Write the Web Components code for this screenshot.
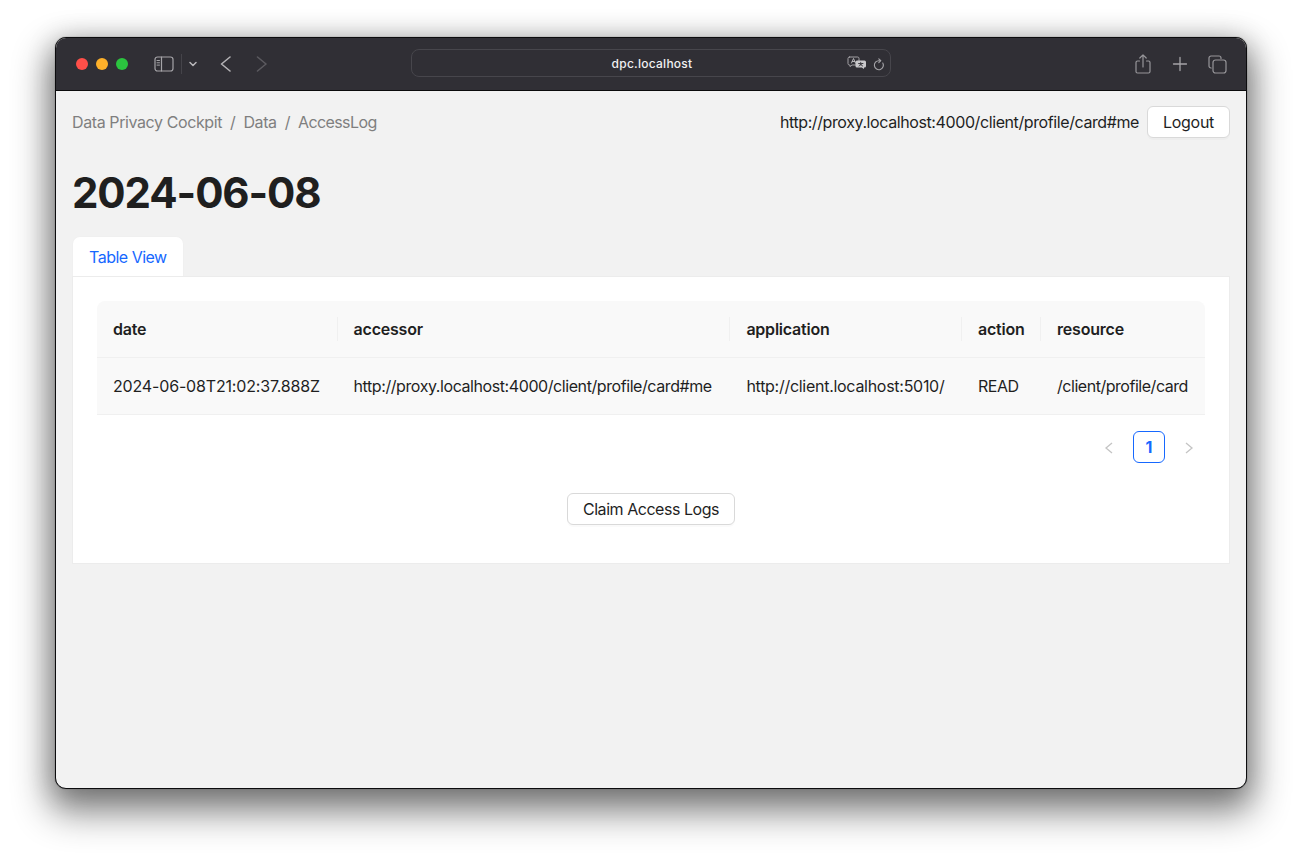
<!DOCTYPE html>
<html>
<head>
<meta charset="utf-8">
<title>dpc.localhost</title>
<style>
    html, body { margin: 0; background: #fff; }
    body { padding: 37px 55px 0; height: 862px; box-sizing: border-box; overflow: hidden; font-family: Inter, "Liberation Sans", sans-serif; }
</style>
</head>
<body>
<browser-window url="dpc.localhost">
    <app-header></app-header>
    <h1 style="margin: 30px 0 0; font: 700 42px/50px Inter, sans-serif; color: #1f1f1f; letter-spacing: -1.1px;">2024-06-08</h1>
    <tab-card label="Table View">
        <log-table></log-table>
        <page-nav></page-nav>
        <div style="display: flex; justify-content: center; margin-top: 30px;">
            <plain-button>Claim Access Logs</plain-button>
        </div>
    </tab-card>
</browser-window>

<script>
class BrowserWindow extends HTMLElement {
    constructor() {
        super();
        const shadow = this.attachShadow({ mode: 'open' });
        shadow.innerHTML = `
        <style>
            :host {
                display: block;
                width: 1192px;
                height: 752px;
                box-sizing: border-box;
                border: 1px solid #0c0c0e;
                border-radius: 11px;
                background: #f2f2f2;
                box-shadow: 0 0 1px #444, 0 18px 36px 6px rgba(0,0,0,.46), 0 4px 28px rgba(0,0,0,.24);
                overflow: hidden;
            }
            .bar {
                height: 53px;
                box-sizing: border-box;
                background: #302f35;
                border-bottom: 1px solid #0b0b0c;
                display: flex;
                align-items: center;
                padding: 0 20px;
                position: relative;
            }
            .dots { display: flex; gap: 8px; }
            .dots i { width: 12px; height: 12px; border-radius: 50%; display: block; }
            svg { display: block; fill: none; stroke-linecap: round; stroke-linejoin: round; }
            .left { display: flex; align-items: center; margin-left: 26px; }
            .sep { width: 1px; height: 20px; background: #45444a; margin: 0 0 0 7px; }
            .url {
                position: absolute;
                left: 355px;
                top: 11px;
                width: 480px;
                height: 28px;
                box-sizing: border-box;
                border: 1px solid #47464c;
                border-radius: 8px;
                display: flex;
                align-items: center;
                justify-content: center;
                padding: 1px 0 0 2px;
                color: #f1f1f2;
                font: 500 12px/1 Inter, sans-serif;
                letter-spacing: .25px;
            }
            .url svg { position: absolute; }
            .right { margin-left: auto; display: flex; align-items: center; gap: 20px; margin-right: -1px; }
            .content { padding: 15px 16px 0; }
        </style>
        <div class="bar">
            <div class="dots">
                <i style="background:#ff4f49"></i><i style="background:#fdb02a"></i><i style="background:#2bc43f"></i>
            </div>
            <div class="left">
                <svg width="20" height="16" viewBox="0 0 20 16" stroke="#a5a4a8" stroke-width="1.2">
                    <rect x="1" y="1" width="18" height="14" rx="2.5"/>
                    <path d="M7.5 1v14"/>
                    <path d="M3 4.5h2.5M3 6.8h2.5M3 9.1h2.5" stroke-width="1"/>
                </svg>
                <div class="sep"></div>
                <svg style="margin-left:7px" width="8" height="6" viewBox="0 0 8 6" stroke="#b8b7ba" stroke-width="1.5"><path d="M1 1.5l3 3 3-3"/></svg>
                <svg style="margin-left:23px" width="11" height="16" viewBox="0 0 11 16" stroke="#b3b2b5" stroke-width="1.6"><path d="M10 1L1.500 8l8.500 7"/></svg>
                <svg style="margin-left:25px" width="11" height="16" viewBox="0 0 11 16" stroke="#5b5a5f" stroke-width="1.6"><path d="M1.500 1L10 8l-8.500 7"/></svg>
            </div>
            <div class="url">
                <span id="url"></span>
                <svg style="left:435px;top:6px" width="20" height="14" viewBox="0 0 20 14">
                    <path d="M2.5 1h8A1.5 1.5 0 0 1 12 2.5v5A1.5 1.5 0 0 1 10.500 9H5l-2 1.600V9h-.5A1.500 1.500 0 0 1 1 7.500v-5A1.500 1.500 0 0 1 2.500 1z" stroke="#a2a1a5" stroke-width="1"/>
                    <path d="M4.500 7l2-4.500 2 4.500M5.300 5.500h2.400" stroke="#c2c1c4" stroke-width=".9"/>
                    <path d="M10 4.500h7.500A1.500 1.500 0 0 1 19 6v4a1.500 1.500 0 0 1-1.500 1.500H17V13l-2.200-1.500H10A1.500 1.500 0 0 1 8.500 10V6A1.500 1.500 0 0 1 10 4.500z" fill="#c9c8cb"/>
                    <path d="M11.500 7.500h4.500M13.700 6.300v1.200M12 10l3.500-2.500M12.700 8l3 2" stroke="#302f35" stroke-width=".8"/>
                </svg>
                <svg style="left:461px;top:8px" width="12" height="13" viewBox="0 0 12 13" stroke="#a5a4a8" stroke-width="1.100">
                    <path d="M9.800 5a4.500 4.500 0 1 1-3.800-2.300h1.500"/>
                    <path d="M5.800.8l2 1.900-2 1.900"/>
                </svg>
            </div>
            <div class="right">
                <svg width="18" height="22" viewBox="0 0 18 22" stroke="#97969a" stroke-width="1.200">
                    <path d="M5.500 8H3.500A1.500 1.500 0 0 0 2 9.500v9A1.500 1.500 0 0 0 3.500 20h11a1.500 1.500 0 0 0 1.500-1.500v-9A1.500 1.500 0 0 0 14.500 8h-2"/>
                    <path d="M9 14V2M5.800 5L9 1.800 12.200 5"/>
                </svg>
                <svg width="16" height="16" viewBox="0 0 16 16" stroke="#a5a4a8" stroke-width="1.300"><path d="M8 1.500v13M1.500 8h13"/></svg>
                <svg width="19" height="19" viewBox="0 0 19 19" stroke="#97969a" stroke-width="1.200">
                    <path d="M3.200 13H3a2 2 0 0 1-2-2V3a2 2 0 0 1 2-2h8a2 2 0 0 1 2 2v.5"/>
                    <rect x="5" y="5" width="13" height="13" rx="2.500"/>
                </svg>
            </div>
        </div>
        <div class="content"><slot></slot></div>
        `;
        shadow.querySelector('#url').textContent = this.getAttribute('url');
    }
}

class PlainButton extends HTMLElement {
    constructor() {
        super();
        const shadow = this.attachShadow({ mode: 'open' });
        shadow.innerHTML = `
        <style>
            :host {
                display: inline-flex;
                align-items: center;
                height: 32px;
                box-sizing: border-box;
                padding: 0 15px;
                background: #fff;
                border: 1px solid #d9d9d9;
                border-radius: 6px;
                box-shadow: 0 2px 0 rgba(0,0,0,.02);
                color: #1f1f1f;
                font: 400 16px/1 Inter, sans-serif;
                letter-spacing: -.46px;
            }
        </style>
        <slot></slot>
        `;
    }
}

class AppHeader extends HTMLElement {
    constructor() {
        super();
        const shadow = this.attachShadow({ mode: 'open' });
        shadow.innerHTML = `
        <style>
            :host {
                display: flex;
                align-items: center;
                justify-content: space-between;
                height: 32px;
                font: 400 16px/24px Inter, sans-serif;
                letter-spacing: -.4px;
            }
            .crumbs { color: #7f7f7f; display: flex; gap: 8px; }
            .crumbs span:last-child { letter-spacing: -.6px; }
            .user { display: flex; align-items: center; gap: 8px; color: #1f1f1f; }
            .user plain-button { letter-spacing: -.3px; }
        </style>
        <div class="crumbs">
            <span>Data Privacy Cockpit</span><span>/</span><span>Data</span><span>/</span><span>AccessLog</span>
        </div>
        <div class="user">
            <span>http://proxy.localhost:4000/client/profile/card#me</span>
            <plain-button>Logout</plain-button>
        </div>
        `;
    }
}

class TabCard extends HTMLElement {
    constructor() {
        super();
        const shadow = this.attachShadow({ mode: 'open' });
        shadow.innerHTML = `
        <style>
            :host { display: block; margin-top: 18px; font: 400 16px/24px Inter, sans-serif; }
            .tab {
                display: inline-block;
                height: 40px;
                box-sizing: border-box;
                padding: 8px 16px;
                background: #fff;
                color: #1668ff;
                border: 1px solid #f0f0f0;
                border-bottom: 0;
                border-radius: 8px 8px 0 0;
                vertical-align: top;
                letter-spacing: -.5px;
            }
            .panel {
                background: #fff;
                border: 1px solid #ececec;
                margin-top: -1px;
                padding: 24px 24px 38px;
                position: relative;
            }
            .tabs { height: 41px; position: relative; z-index: 1; }
        </style>
        <div class="tabs"><span class="tab" id="label"></span></div>
        <div class="panel"><slot></slot></div>
        `;
        shadow.querySelector('#label').textContent = this.getAttribute('label');
    }
}

class LogTable extends HTMLElement {
    columns = ['date', 'accessor', 'application', 'action', 'resource'];
    // per-cell tracking, the digits of the date run wider than the rest
    spacing = ['-.17px', '-.42px', '-.28px', '-.5px', '-.47px'];
    rows = [
        ['2024-06-08T21:02:37.888Z', 'http://proxy.localhost:4000/client/profile/card#me', 'http://client.localhost:5010/', 'READ', '/client/profile/card']
    ];

    constructor() {
        super();
        const shadow = this.attachShadow({ mode: 'open' });
        const head = this.columns.map((c) => `<th>${c}</th>`).join('');
        const body = this.rows.map((r) => `<tr>${r.map((v, i) => `<td style="letter-spacing:${this.spacing[i]}">${v}</td>`).join('')}</tr>`).join('');
        shadow.innerHTML = `
        <style>
            :host { display: block; font: 400 16px/24px Inter, sans-serif; color: #1f1f1f; }
            table { width: 100%; border-collapse: separate; border-spacing: 0; }
            th {
                position: relative;
                text-align: left;
                font-weight: 600;
                padding: 16px;
                background: #f9f9f9;
                border-bottom: 1px solid #f0f0f0;
                white-space: nowrap;
                letter-spacing: -.22px;
            }
            th:first-child { border-top-left-radius: 8px; }
            th:last-child { border-top-right-radius: 8px; }
            th:not(:last-child)::before {
                content: '';
                position: absolute;
                right: 0;
                top: 50%;
                height: 24px;
                width: 1px;
                margin-top: -12px;
                background: #f0f0f0;
            }
            td {
                padding: 16px;
                background: #f9f9f9;
                border-bottom: 1px solid #f0f0f0;
                white-space: nowrap;
            }
        </style>
        <table>
            <thead><tr>${head}</tr></thead>
            <tbody>${body}</tbody>
        </table>
        `;
    }
}

class PageNav extends HTMLElement {
    constructor() {
        super();
        const shadow = this.attachShadow({ mode: 'open' });
        shadow.innerHTML = `
        <style>
            :host {
                display: flex;
                justify-content: flex-end;
                align-items: center;
                gap: 8px;
                margin-top: 16px;
                height: 32px;
            }
            .arrow { width: 32px; height: 32px; display: flex; align-items: center; justify-content: center; padding-top: 2px; box-sizing: border-box; }
            .page {
                width: 32px;
                height: 32px;
                box-sizing: border-box;
                border: 1px solid #1668ff;
                border-radius: 6px;
                color: #1668ff;
                font: 700 16px/30px Inter, sans-serif;
                text-align: center;
            }
            svg { display: block; fill: none; stroke: #c4c4c4; stroke-width: 1.300; }
        </style>
        <span class="arrow"><svg width="10" height="12" viewBox="0 0 10 12"><path d="M8 1L2 6l6 5"/></svg></span>
        <span class="page">1</span>
        <span class="arrow"><svg width="10" height="12" viewBox="0 0 10 12"><path d="M2 1l6 5-6 5"/></svg></span>
        `;
    }
}

customElements.define('plain-button', PlainButton);
customElements.define('browser-window', BrowserWindow);
customElements.define('app-header', AppHeader);
customElements.define('tab-card', TabCard);
customElements.define('log-table', LogTable);
customElements.define('page-nav', PageNav);
</script>
</body>
</html>
